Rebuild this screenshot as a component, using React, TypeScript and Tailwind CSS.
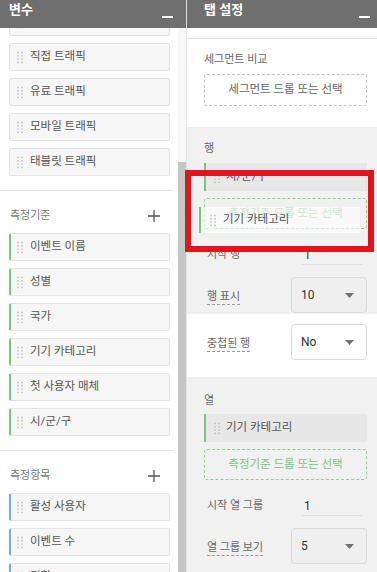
const font = "font-[Roboto,'Noto_Sans_CJK_KR',sans-serif]";

function Dots({ className = '' }: { className?: string }) {
  return (
    <svg width="6" height="13" viewBox="0 0 6 13" className={`shrink-0 ${className}`}>
      {[1.5, 4.8, 8.1, 11.4].map(y =>
        [1, 5].map(x => <circle key={`${x}-${y}`} cx={x} cy={y} r="0.95" fill="#c4c4c4" />)
      )}
    </svg>
  );
}

function PanelHeader({ title, pad }: { title: string; pad: string }) {
  return (
    <div className={`flex h-[28px] shrink-0 items-start justify-between bg-[#6f6f6f] ${pad}`}>
      <span className="mt-[3px] text-[13px] font-bold leading-[14px] text-white">{title}</span>
      <span className="mt-[16px] h-[2px] w-[11px] bg-white" />
    </div>
  );
}

function VarCard({ label, accent }: { label: string; accent?: 'green' | 'blue' }) {
  const bar =
    accent === 'green'
      ? 'border-l-2 border-l-[#7cc47f]'
      : accent === 'blue'
        ? 'border-l-2 border-l-[#7aa7e5]'
        : '';
  return (
    <div className={`flex h-[28px] shrink-0 items-center rounded-[2px] border border-[#e3e3e3] bg-[#f6f6f6] ${bar}`}>
      <Dots className={accent ? 'ml-[6px]' : 'ml-[7px]'} />
      <span className="ml-[7px] text-[11.5px] leading-none text-[#555]">{label}</span>
    </div>
  );
}

function GroupHead({ title }: { title: string }) {
  return (
    <div className="mt-[14px] mr-[5px] border-t border-[#e4e4e4] pt-[18px]">
      <div className="flex h-[14px] items-center justify-between pl-[10px] pr-[13px]">
        <span className="text-[11px] text-[#777]">{title}</span>
        <svg width="12" height="12" viewBox="0 0 12 12">
          <path d="M6 0v12M0 6h12" stroke="#555" strokeWidth="1.3" />
        </svg>
      </div>
    </div>
  );
}

function SlotCard({ label }: { label: string }) {
  return (
    <div className="flex h-[28px] items-center border-l-2 border-l-[#7cc47f] bg-[#e7e7e7]">
      <Dots className="ml-[8px]" />
      <span className="ml-[6px] text-[11.5px] leading-none text-[#555]">{label}</span>
    </div>
  );
}

function DropZone() {
  return (
    <div className="mt-[7px] flex h-[31px] items-center justify-center rounded-[3px] border border-dashed border-[#8fcf92] text-[11.5px] text-[#7dc180]">
      측정기준 드롭 또는 선택
    </div>
  );
}

function InputRow({ label }: { label: string }) {
  return (
    <div className="mt-[16px] flex h-[20px] items-center">
      <span className="flex-1 pl-[3px] text-[11px] text-[#666]">{label}</span>
      <div className="mr-[5px] flex h-full w-[60px] items-center border-b border-[#dedede] pl-[2px] text-[12px] text-[#333]">
        1
      </div>
    </div>
  );
}

function SelectRow({ label, value, white }: { label: string; value: string; white?: boolean }) {
  return (
    <div className="flex h-[36px] items-center">
      <span className="flex-1 pl-[3px]">
        <span className="border-b border-dashed border-[#999] pb-[1px] text-[11px] text-[#666]">{label}</span>
      </span>
      <div
        className={`flex h-full w-[76px] items-center justify-between rounded-[4px] border border-[#dadada] pl-[9px] pr-[12px] text-[12px] text-[#333] ${white ? 'bg-white' : 'bg-[#efefef]'}`}
      >
        <span>{value}</span>
        <svg width="9" height="5" viewBox="0 0 9 5">
          <path d="M0 0h9L4.5 5z" fill="#707070" />
        </svg>
      </div>
    </div>
  );
}

export default function App() {
  const dims = ['이벤트 이름', '성별', '국가', '기기 카테고리', '첫 사용자 매체', '시/군/구'];
  const metrics = ['활성 사용자', '이벤트 수', '전환'];

  return (
    <div className={`relative flex h-[572px] w-[377px] overflow-hidden bg-white ${font}`}>
      {/* 변수 */}
      <div className="flex w-[187px] shrink-0 flex-col border-r border-[#e2e2e2]">
        <PanelHeader title="변수" pad="pl-[9px] pr-[13px]" />
        <div className="flex min-h-0 flex-1">
          <div className="flex w-[178px] flex-col overflow-hidden">
            <div className="mt-[-20px] flex flex-col gap-[7px] pl-[9px] pr-[8px]">
              {['방문', '직접 트래픽', '유료 트래픽', '모바일 트래픽', '태블릿 트래픽'].map(v => (
                <VarCard key={v} label={v} />
              ))}
            </div>
            <GroupHead title="측정기준" />
            <div className="mt-[10px] flex flex-col gap-[7px] pl-[9px] pr-[8px]">
              {dims.map(v => (
                <VarCard key={v} label={v} accent="green" />
              ))}
            </div>
            <GroupHead title="측정항목" />
            <div className="mt-[10px] flex flex-col gap-[7px] pl-[9px] pr-[8px]">
              {metrics.map(v => (
                <VarCard key={v} label={v} accent="blue" />
              ))}
            </div>
          </div>
          <div className="flex w-[8px] flex-col bg-[#f7f7f7]">
            <div className="h-[134px] shrink-0" />
            <div className="flex-1 bg-[#c6c6c6]" />
          </div>
        </div>
      </div>

      {/* 탭 설정 */}
      <div className="flex flex-1 flex-col bg-[#f1f1f1]">
        <PanelHeader title="탭 설정" pad="pl-[17px] pr-[7px]" />
        <div className="h-[11px] shrink-0 border-b border-[#e2e2e2] bg-white" />
        <div className="shrink-0 bg-white pb-[21px] pl-[17px] pr-[10px] pt-[14px]">
          <div className="flex h-[14px] items-center text-[11px] text-[#666]">세그먼트 비교</div>
          <div className="mt-[7px] flex h-[32px] items-center justify-center rounded-[3px] border border-dashed border-[#c4c4c4] text-[11.5px] text-[#666]">
            세그먼트 드롭 또는 선택
          </div>
        </div>

        <div className="shrink-0 pb-[1px] pl-[17px] pr-[10px] pt-[15px]">
          <div className="flex h-[14px] items-center text-[11px] text-[#666]">행</div>
          <div className="mt-[7px]">
            <SlotCard label="시/군/구" />
          </div>
          <div className="mt-[1px]">
            <DropZone />
          </div>
          <InputRow label="시작 행" />
          <div className="mt-[12px]">
            <SelectRow label="행 표시" value="10" />
          </div>
        </div>

        <div className="shrink-0 bg-white pb-[17px] pl-[17px] pr-[10px] pt-[10px]">
          <SelectRow label="중첩된 행" value="No" white />
        </div>

        <div className="shrink-0 pl-[17px] pr-[10px] pt-[17px]">
          <div className="flex h-[14px] items-center text-[11px] text-[#666]">열</div>
          <div className="mt-[6px]">
            <SlotCard label="기기 카테고리" />
          </div>
          <DropZone />
          <InputRow label="시작 열 그룹" />
          <div className="mt-[12px]">
            <SelectRow label="열 그룹 보기" value="5" />
          </div>
        </div>
      </div>

      {/* dragged card */}
      <div className="absolute left-[199px] top-[207px] flex h-[26px] w-[161px] items-center border-l-2 border-l-[#7cc47f] bg-white/60">
        <Dots className="ml-[9px]" />
        <span className="ml-[7px] text-[11.5px] leading-none text-[#555]">기기 카테고리</span>
      </div>

      {/* annotation */}
      <div className="absolute left-[185px] top-[170px] h-[82px] w-[189px] border-[6px] border-[#e3141b]" />
    </div>
  );
}
